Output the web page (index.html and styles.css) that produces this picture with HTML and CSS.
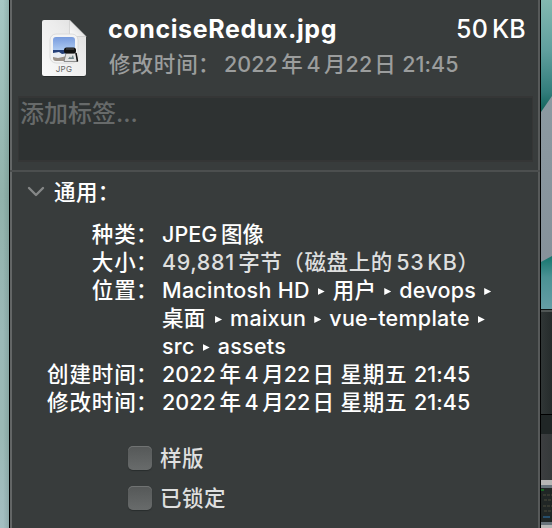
FILE: index.html
```html
<!DOCTYPE html>
<html lang="zh-CN">
<head>
<meta charset="utf-8">
<title>conciseRedux.jpg</title>
<link rel="stylesheet" href="styles.css">
</head>
<body>
<div class="desktop">
  <div class="wallpaper-left"></div>
  <main class="panel">
    <header class="header">
      <svg class="file-icon" width="48" height="60" viewBox="0 0 48 60">
        <defs>
          <linearGradient id="paper" x1="0" y1="1" x2="1" y2="0"><stop stop-color="#fafafa"/><stop offset=".6" stop-color="#ececec"/><stop offset="1" stop-color="#dcdcdc"/></linearGradient>
          <linearGradient id="sky" x1="0" y1="0" x2="0" y2="1"><stop stop-color="#789bdd"/><stop offset="1" stop-color="#b1cdf3"/></linearGradient>
          <linearGradient id="fold" x1="0" y1="1" x2="1" y2="0"><stop stop-color="#fff"/><stop offset=".5" stop-color="#e6e6e6"/></linearGradient>
          <clipPath id="photo"><rect x="13" y="19" width="22" height="24" rx="3"/></clipPath>
        </defs>
        <path d="M5 3H30L46 19V56Q46 59 43 59H5Q2 59 2 56V6Q2 3 5 3Z" fill="#1e2121" opacity=".6"/>
        <path d="M4 2H29.500L46 18.500V56Q46 58 44 58H4Q2 58 2 56V4Q2 2 4 2Z" fill="url(#paper)"/>
        <path d="M29.500 2L46 18.500H32Q29.500 18.500 29.500 16Z" fill="url(#fold)" stroke="#c5c5c5" stroke-width=".6"/>
        <rect x="10" y="16" width="28" height="29" rx="6" fill="#f4f4f4" stroke="#d5d5d5" stroke-width=".8"/>
        <g clip-path="url(#photo)">
          <rect x="13" y="19" width="22" height="14" fill="url(#sky)"/>
          <rect x="13" y="32" width="22" height="4" fill="#253f78"/>
          <path d="M13 35L19 34L22 36L28 35V40H13Z" fill="#e8edf4"/>
          <path d="M13 39L18 40L27 38V43H13Z" fill="#9b9188"/>
        </g>
        <path d="M26 35H36L37.500 43.500H24Z" fill="#e2e2e2" stroke="#777" stroke-width=".8"/>
        <rect x="24" y="29.500" width="12" height="6" rx="2.500" fill="#111"/>
        <path d="M26 31H34" stroke="#555"/>
        <path d="M36 35L37.500 43.500" stroke="#111" stroke-width="1.500"/>
        <path d="M28 41L30 38.500L31 40L33 37L34 41Z" fill="#6c8186"/>
        <text class="icon-label" x="24" y="54" text-anchor="middle">JPG</text>
      </svg>
      <div class="summary">
        <div class="name-row"><span class="name">conciseRedux.jpg</span><span class="size">50<i class="thin"></i>KB</span></div>
        <div class="modified"><span class="mod-label">修改时间<span class="colon">：</span></span><span>2022</span><i class="gap"></i>年<i class="gap"></i>4<i class="gap"></i>月22<i class="gap2"></i>日<i class="gap3"></i>21:45</div>
      </div>
    </header>
    <div class="tags">添加标签...</div>
    <section class="general">
      <h2 class="section-title">
        <svg class="chevron" width="18" height="12" viewBox="0 0 18 12"><path d="M2 2L9 9L16 2" fill="none" stroke="#858787" stroke-width="2.400" stroke-linecap="round" stroke-linejoin="round"/></svg>
        <span>通用：</span>
      </h2>
      <dl class="details">
        <dt>种类<span class="colon">：</span></dt><dd>JPEG<i class="gap"></i>图像</dd>
        <dt>大小<span class="colon">：</span></dt><dd class="muted">49,881<i class="gap"></i>字节（磁盘上的<i class="gap"></i>53<i class="thin"></i>KB）</dd>
        <dt>位置<span class="colon">：</span></dt>
        <dd class="location">
          <div>Macintosh HD<i class="arrow"></i>用户<i class="arrow"></i>devops<i class="arrow"></i></div>
          <div>桌面<i class="arrow wide"></i>maixun<i class="arrow"></i>vue-template<i class="arrow"></i></div>
          <div>src<i class="arrow"></i>assets</div>
        </dd>
        <dt>创建时间<span class="colon">：</span></dt><dd>2022<i class="gap"></i>年<i class="gap"></i>4<i class="gap"></i>月22<i class="gap2"></i>日<i class="gap3"></i><span class="weekday">星期五</span><i class="gap3"></i>21:45</dd>
        <dt>修改时间<span class="colon">：</span></dt><dd>2022<i class="gap"></i>年<i class="gap"></i>4<i class="gap"></i>月22<i class="gap2"></i>日<i class="gap3"></i><span class="weekday">星期五</span><i class="gap3"></i>21:45</dd>
      </dl>
      <div class="options">
        <div class="option"><span class="checkbox"></span>样版</div>
        <div class="option"><span class="checkbox"></span>已锁定</div>
      </div>
    </section>
  </main>
  <aside class="background-window">
    <svg class="wallpaper-right" width="11" height="309" viewBox="0 0 11 309">
      <defs>
        <linearGradient id="teal" x1="0" y1="0" x2="0" y2="1"><stop stop-color="#83b9b0"/><stop offset=".45" stop-color="#609f9e"/><stop offset=".82" stop-color="#337d7c"/><stop offset="1" stop-color="#106158"/></linearGradient>
        <linearGradient id="mist" x1="0" y1="0" x2="0" y2="1"><stop stop-color="#909fa6"/><stop offset="1" stop-color="#848f98"/></linearGradient>
        <linearGradient id="lower" x1="0" y1="0" x2="0" y2="1"><stop stop-color="#14756d"/><stop offset=".4" stop-color="#4b9294"/><stop offset="1" stop-color="#659da5"/></linearGradient>
      </defs>
      <rect width="11" height="309" fill="url(#mist)"/>
      <path d="M0 0H11V96L0 112Z" fill="url(#teal)"/>
      <path d="M0 262L11 256V309H0Z" fill="url(#lower)"/>
    </svg>
    <div class="win-toolbar"></div>
    <div class="win-tabs"></div>
    <div class="win-content"></div>
    <div class="win-light"></div>
    <div class="win-frame"></div>
    <svg width="11" height="34" viewBox="0 0 11 34">
      <rect width="11" height="34" fill="#202625"/>
      <path d="M0 2H3" stroke="#176723" stroke-width="2"/>
      <path d="M2 7H11M3 12H11M2 18H11M3 23H10" stroke="#4b4b3d" stroke-dasharray="3 1"/>
      <path d="M2 29H9" stroke="#264e6b" stroke-width="2"/>
    </svg>
    <div class="win-frame"></div>
    <div class="win-light"></div>
  </aside>
</div>
</body>
</html>
```
FILE: styles.css
```css
* { box-sizing: border-box; }
body { margin: 0; background: #383c3c; overflow: hidden; }
.desktop {
  display: flex;
  width: 552px;
  height: 528px;
  font: 500 21.5px/28px Inter, "Noto Sans CJK SC", sans-serif;
  color: #fff;
  white-space: nowrap;
  overflow: hidden;
}
.wallpaper-left {
  width: 9px;
  background: linear-gradient(90deg, transparent 35%, rgba(60, 90, 85, .2)), linear-gradient(#a6c8c4, #91b2ab 37%, #9bb9b7 63%, #9ab9b5 82%, #a4bfc2);
}
.panel {
  width: 532px;
  background: #383c3c;
  border: solid #000;
  border-width: 0 1px;
  box-shadow: inset 2px 0 #636666, inset -2px 0 #575a5a;
}
.header { display: flex; height: 96px; padding: 17px 14px 0 30px; }
.file-icon { margin-top: 1px; }
.summary { flex: 1; margin-left: 20px; }
.name-row { display: flex; justify-content: space-between; height: 33px; line-height: 24px; }
.name { font-size: 25px; font-weight: 700; letter-spacing: .6px; }
.size { font-size: 25px; font-weight: 500; letter-spacing: .2px; }
.modified { color: #9b9d9d; line-height: 28px; letter-spacing: .05px; }
.mod-label { display: inline-block; width: 116px; padding-left: 1px; letter-spacing: .9px; }
.colon { margin: 0 .5px 0 -.5px; }
.tags {
  height: 66px;
  margin: 0 7px 0 8px;
  padding-left: 1px;
  border: 1px solid #353636;
  border-width: 2px 1px;
  background: #2e3232;
  color: #676a6a;
  font-size: 24px;
  line-height: 31px;
}
.general { margin-top: 8px; border-top: 2px solid #4c4f4f; }
.section-title { display: flex; align-items: center; height: 40px; margin: 0; padding-left: 17px; font-size: inherit; font-weight: 500; }
.section-title span { margin-left: 9px; letter-spacing: .4px; }
.chevron { flex: none; }
.details { display: grid; grid-template-columns: 149px 1fr; margin: 8px 0 0; letter-spacing: .07px; }
.details dt { text-align: right; letter-spacing: .9px; }
.details dd { margin: 0 0 0 3px; }
.details .muted { color: #dedfdf; letter-spacing: .6px; }
.details .location { letter-spacing: .27px; }
.gap, .gap2, .gap3, .thin { display: inline-block; width: 3.5px; }
.gap2 { width: 2px; }
.gap3 { width: 6.5px; }
.thin { width: 4px; }
.muted .thin { width: 3px; }
.weekday { letter-spacing: .8px; }
.arrow { display: inline-block; width: 7px; height: 7px; margin: 0 8px 3px; background: #fff; clip-path: polygon(0 0, 100% 50%, 0 100%); }
.arrow.wide { margin-left: 9.5px; }
.options { display: grid; gap: 12px; margin: 28px 0 0 118px; color: #dedfdf; letter-spacing: .5px; }
.option { display: flex; align-items: center; gap: 8px; height: 28px; }
.checkbox {
  width: 24px;
  height: 24px;
  border-radius: 5px;
  background: linear-gradient(#555858, #686b6b);
  box-shadow: 0 1px 1px #292d2d, inset 0 1px #707373;
}
.icon-label { font: 400 8px Inter, sans-serif; fill: #666; letter-spacing: .3px; }
.background-window { width: 11px; }
.background-window svg { display: block; }
.win-toolbar { height: 105px; border-top: 1px solid #101515; box-shadow: inset 0 2px #505655; background: linear-gradient(90deg, #303636, #252b2b); }
.win-tabs { height: 20px; border-top: 1px solid #000; background: #202626; }
.win-content { height: 46px; background: linear-gradient(90deg, #3c3e40, #35393a); }
.win-light { height: 5px; background: #b6b6b5; }
.win-frame { height: 3px; background: #68737b; }
```
